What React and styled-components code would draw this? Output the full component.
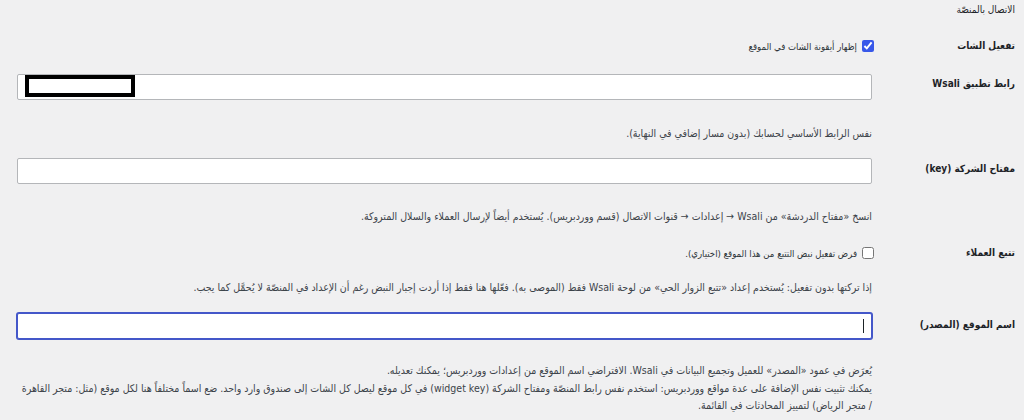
import styled, { createGlobalStyle } from 'styled-components';

const GlobalStyle = createGlobalStyle`
  html, body {
    margin: 0;
    padding: 0;
    background: #f0f0f1;
  }
  body {
    font-family: Tahoma, "DejaVu Sans Condensed", "DejaVu Sans", sans-serif;
    color: #1d2327;
  }
`;

// Page wrapper: right-to-left settings screen
const Page = styled.div`
  direction: rtl;
  width: 1024px;
  height: 420px;
  box-sizing: border-box;
  padding: 2px 9px 0 17px;
  background: #f0f0f1;
  overflow: hidden;
  display: flex;
  flex-direction: column;
`;

const SectionTitle = styled.h2`
  margin: 0;
  font-size: 10px;
  line-height: 16px;
  font-weight: 400;
  color: #1d2327;
`;

// One settings row: label column + field column
const Row = styled.div`
  display: grid;
  grid-template-columns: 143px minmax(0, 1fr);
  align-items: start;
  margin-top: ${(p) => p.$space}px;
`;

const Label = styled.label`
  font-size: 10px;
  font-weight: 700;
  line-height: 16px;
  padding-top: ${(p) => p.$offset || 0}px;
  color: #1d2327;
`;

const Field = styled.div`
  display: flex;
  flex-direction: column;
  min-width: 0;
  gap: ${(p) => p.$gap}px;
`;

const CheckLine = styled.label`
  display: flex;
  align-items: center;
  gap: 5px;
  height: 16px;
  font-size: 9.5px;
  color: #2c3338;
  margin-right: -2px;
`;

const Check = styled.input`
  width: 12px;
  height: 12px;
  margin: 0;
  accent-color: #3858e9;
`;

const InputWrap = styled.div`
  position: relative;
  height: 26px;
`;

const TextInput = styled.input`
  box-sizing: border-box;
  width: 100%;
  height: 26px;
  margin: 0;
  padding: 0 8px;
  background: #fff;
  border: 1px solid ${(p) => (p.$focused ? '#4457c9' : '#b4b6b9')};
  border-radius: 2px;
  box-shadow: ${(p) => (p.$focused ? '0 0 0 1px #4457c9' : 'none')};
  font-family: inherit;
  font-size: 11px;
  outline: none;
`;

// Black box hiding the saved address
const Redaction = styled.span`
  position: absolute;
  left: 8px;
  top: 1px;
  width: 110px;
  height: 22px;
  box-sizing: border-box;
  border: 4px solid #000;
  background: #fff;
`;

const Caret = styled.span`
  position: absolute;
  right: 8px;
  top: 6px;
  width: 1px;
  height: 14px;
  background: #1d2327;
`;

const Description = styled.p`
  margin: 0;
  font-size: 10.5px;
  line-height: 17px;
  color: #3c434a;
`;

const Notes = styled.div`
  display: flex;
  flex-direction: column;
  gap: 1px;
`;

export default function App() {
  return (
    <>
      <GlobalStyle />
      <Page>
        <SectionTitle>الاتصال بالمنصّة</SectionTitle>

        <Row $space={20}>
          <Label>تفعيل الشات</Label>
          <CheckLine>
            <Check type="checkbox" defaultChecked />
            إظهار أيقونة الشات في الموقع
          </CheckLine>
        </Row>

        <Row $space={20}>
          <Label $offset={2}>رابط تطبيق Wsali</Label>
          <Field $gap={25}>
            <InputWrap>
              <TextInput type="text" />
              <Redaction />
            </InputWrap>
            <Description>نفس الرابط الأساسي لحسابك (بدون مسار إضافي في النهاية).</Description>
          </Field>
        </Row>

        <Row $space={16}>
          <Label $offset={3}>مفتاح الشركة (key)</Label>
          <Field $gap={24}>
            <InputWrap>
              <TextInput type="text" />
            </InputWrap>
            <Description>
              انسخ «مفتاح الدردشة» من Wsali → إعدادات → قنوات الاتصال (قسم ووردبريس). يُستخدم أيضاً لإرسال العملاء والسلال المتروكة.
            </Description>
          </Field>
        </Row>

        <Row $space={20}>
          <Label>تتبع العملاء</Label>
          <Field $gap={18}>
            <CheckLine>
              <Check type="checkbox" />
              فرض تفعيل نبض التتبع من هذا الموقع (اختياري).
            </CheckLine>
            <Description>
              إذا تركتها بدون تفعيل: يُستخدم إعداد «تتبع الزوار الحي» من لوحة Wsali فقط (الموصى به). فعّلها هنا فقط إذا أردت إجبار النبض رغم أن الإعداد في المنصّة لا يُحمَّل كما يجب.
            </Description>
          </Field>
        </Row>

        <Row $space={17}>
          <Label $offset={4}>اسم الموقع (المصدر)</Label>
          <Field $gap={23}>
            <InputWrap>
              <TextInput type="text" $focused />
              <Caret />
            </InputWrap>
            <Notes>
              <Description>
                يُعرَض في عمود «المصدر» للعميل وتجميع البيانات في Wsali. الافتراضي اسم الموقع من إعدادات ووردبريس؛ يمكنك تعديله.
              </Description>
              <Description>
                يمكنك تثبيت نفس الإضافة على عدة مواقع ووردبريس: استخدم نفس رابط المنصّة ومفتاح الشركة (widget key) في كل موقع ليصل كل الشات إلى صندوق وارد واحد. ضع اسماً مختلفاً هنا لكل موقع (مثل: متجر القاهرة / متجر الرياض) لتمييز المحادثات في القائمة.
              </Description>
            </Notes>
          </Field>
        </Row>
      </Page>
    </>
  );
}
